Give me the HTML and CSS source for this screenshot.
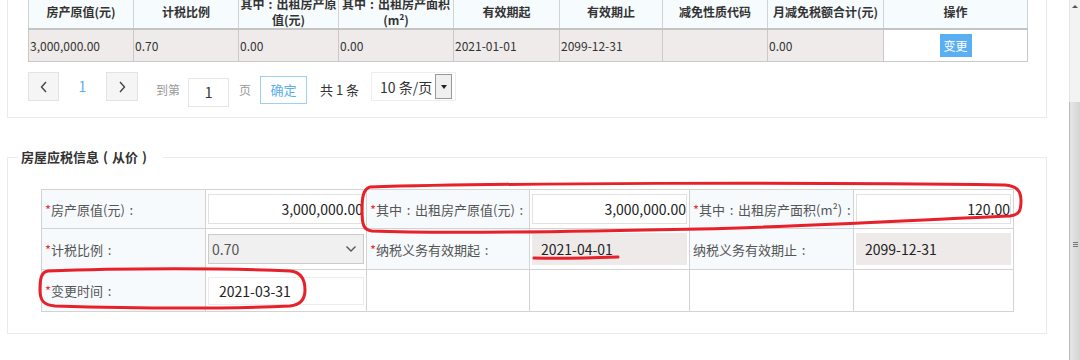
FILE: index.html
```html
<!DOCTYPE html>
<html lang="zh-CN">
<head>
    <meta charset="UTF-8">
    <meta name="viewport" content="width=device-width, initial-scale=1.0">
    <title>房屋应税信息</title>
    <link rel="stylesheet" href="styles.css">
</head>
<body>
    <div class="screen">
        <div class="main">
            <!-- 已有记录 -->
            <div class="panel">
                <table class="grid">
                    <colgroup>
                        <col style="width:105px"><col style="width:105px"><col style="width:100px">
                        <col style="width:115px"><col style="width:106px"><col style="width:103px">
                        <col style="width:105px"><col style="width:116px"><col style="width:144px">
                    </colgroup>
                    <tr>
                        <th>房产原值(元)</th>
                        <th>计税比例</th>
                        <th>其中<span class="p">:</span>出租房产原值(元)</th>
                        <th>其中<span class="p">:</span>出租房产面积(m²)</th>
                        <th>有效期起</th>
                        <th>有效期止</th>
                        <th>减免性质代码</th>
                        <th>月减免税额合计(元)</th>
                        <th>操作</th>
                    </tr>
                    <tr>
                        <td>3,000,000.00</td>
                        <td>0.70</td>
                        <td>0.00</td>
                        <td>0.00</td>
                        <td>2021-01-01</td>
                        <td>2099-12-31</td>
                        <td></td>
                        <td>0.00</td>
                        <td class="op"><span class="btn-change">变更</span></td>
                    </tr>
                </table>

                <div class="pager">
                    <span class="pg-btn prev">
                        <svg width="8" height="12" viewBox="0 0 8 12"><polyline points="6,1 1.5,6 6,11" fill="none" stroke="#444" stroke-width="1.4"/></svg>
                    </span>
                    <span class="pg-num">1</span>
                    <span class="pg-btn next">
                        <svg width="8" height="12" viewBox="0 0 8 12"><polyline points="2,1 6.5,6 2,11" fill="none" stroke="#444" stroke-width="1.4"/></svg>
                    </span>
                    <span class="pg-txt goto">到第</span>
                    <span class="pg-input">1</span>
                    <span class="pg-txt page">页</span>
                    <span class="pg-ok">确定</span>
                    <span class="pg-total">共 1 条</span>
                    <span class="pg-size">
                        10 条/页
                        <span class="pg-drop"></span>
                    </span>
                </div>
            </div>

            <!-- 房屋应税信息 -->
            <fieldset class="box">
                <legend>房屋应税信息<span class="p">(</span>从价<span class="p">)</span></legend>
                <table class="form">
                    <colgroup>
                        <col style="width:164px"><col style="width:161px"><col style="width:163px">
                        <col style="width:160px"><col style="width:164px"><col style="width:160px">
                    </colgroup>
                    <tr class="r1">
                        <td class="lb"><span class="req">*</span>房产原值(元)<span class="p">:</span></td>
                        <td><div class="fld">3,000,000.00</div></td>
                        <td class="lb"><span class="req">*</span>其中<span class="p">:</span>出租房产原值(元)<span class="p">:</span></td>
                        <td><div class="fld">3,000,000.00</div></td>
                        <td class="lb"><span class="req">*</span>其中<span class="p">:</span>出租房产面积(m²)<span class="p">:</span></td>
                        <td><div class="fld">120.00</div></td>
                    </tr>
                    <tr class="r2">
                        <td class="lb"><span class="req">*</span>计税比例<span class="p">:</span></td>
                        <td>
                            <div class="fld sel">
                                0.70
                                <svg width="12" height="8" viewBox="0 0 12 8"><polyline points="1.5,1.5 6,6 10.5,1.5" fill="none" stroke="#555" stroke-width="1.4"/></svg>
                            </div>
                        </td>
                        <td class="lb"><span class="req">*</span>纳税义务有效期起<span class="p">:</span></td>
                        <td><div class="fld ro">2021-04-01</div></td>
                        <td class="lb">纳税义务有效期止<span class="p">:</span></td>
                        <td><div class="fld ro">2099-12-31</div></td>
                    </tr>
                    <tr class="r3">
                        <td class="lb"><span class="req">*</span>变更时间<span class="p">:</span></td>
                        <td><div class="fld date">2021-03-31</div></td>
                        <td class="blank"></td>
                        <td class="blank"></td>
                        <td class="blank"></td>
                        <td class="blank"></td>
                    </tr>
                </table>
            </fieldset>

            <!-- 红色手绘标注 -->
            <svg class="marks" width="1069" height="360" viewBox="0 0 1069 360">
                <path d="M370,187 C500,183 800,182 1005,185 C1017,186 1021,191 1021,201 C1021,211 1019,215 1010,216 C930,219 820,226 700,229 C560,232 420,233 372,231 C363,230 362,224 362,210 C362,198 363,189 370,187 Z"/>
                <path d="M48,271 C120,268 230,268 290,271 C302,272 305,280 305,290 C305,300 300,305 290,306 C220,309 120,308 55,306 C43,305 40,300 40,290 C40,279 41,272 48,271 Z"/>
                <path d="M534,258 C560,259 590,258 618,257"/>
            </svg>
        </div>

        <div class="scrollbar">
            <div class="sb-top"><span class="sb-arrow"></span></div>
            <div class="sb-thumb"><span class="sb-grip"></span></div>
        </div>
    </div>
</body>
</html>
```

FILE: styles.css
```css
body{
    margin: 0;
    font-family: "Noto Sans CJK SC", "Noto Sans", sans-serif;
    color: #333;
    background-color: #fff;
    overflow: hidden;
}
/* 全角标点：半角符号放在一个字宽里居中 */
.p{
    display: inline-block;
    width: 1em;
    text-align: center;
}
.screen{
    display: flex;
    height: 360px;
    overflow: hidden;
}
.main{
    flex: 1;
    position: relative;
}

/* 上方列表 */
.panel{
    box-sizing: border-box;
    width: 1040px;
    margin: -6px 0 0 7px;
    padding: 0 0 9px 20px;
    border: 1px solid #ebebeb;
    border-top: 0;
}
.grid{
    width: 999px;
    border-collapse: collapse;
    table-layout: fixed;
    font-size: 12px;
}
.grid th{
    height: 33px;
    padding: 0;
    line-height: 16px;
    font-weight: bold;
    color: #333;
    text-align: center;
    background-color: #f6fbfd;
    border: 1px solid #d2d2d2;
    border-bottom: 2px solid #c4c4c4;
}
.grid td{
    height: 31px;
    padding: 0 1px;
    line-height: 16px;
    background-color: #efebeb;
    border: 1px solid #c9c9c9;
}
.grid td.op{
    background-color: #fff;
    text-align: center;
}
.btn-change{
    display: inline-block;
    width: 32px;
    height: 23px;
    line-height: 23px;
    color: #fff;
    background-color: #5aaef2;
    vertical-align: middle;
}

/* 分页 */
.pager{
    display: flex;
    align-items: flex-start;
    margin-top: 10px;
    height: 36px;
}
.pg-btn{
    box-sizing: border-box;
    display: flex;
    align-items: center;
    justify-content: center;
    width: 31px;
    height: 29px;
    border: 1px solid #e3e3e3;
    background-color: #f5f5f5;
}
.pg-btn.next{
    width: 32px;
}
.pg-num{
    width: 47px;
    text-align: center;
    line-height: 29px;
    font-size: 14px;
    color: #5aaeee;
}
.pg-txt{
    font-size: 12px;
    line-height: 36px;
    color: #999;
}
.pg-txt.goto{
    margin-left: 18px;
}
.pg-txt.page{
    margin-left: 10px;
}
.pg-input{
    box-sizing: border-box;
    width: 41px;
    height: 29px;
    margin: 6px 0 0 8px;
    border: 1px solid #e6e6e6;
    text-align: center;
    line-height: 27px;
    font-size: 14px;
}
.pg-ok{
    box-sizing: border-box;
    width: 47px;
    height: 28px;
    margin: 4px 0 0 9px;
    border: 1px solid #9fd0f3;
    text-align: center;
    line-height: 26px;
    font-size: 13px;
    color: #5aaeee;
}
.pg-total{
    margin-left: 13px;
    font-size: 13px;
    line-height: 36px;
}
.pg-size{
    box-sizing: border-box;
    display: flex;
    align-items: center;
    justify-content: space-between;
    width: 85px;
    height: 29px;
    margin-left: 12px;
    padding: 0 3px 0 8px;
    border: 1px solid #eee;
    font-size: 14px;
}
.pg-drop{
    box-sizing: border-box;
    display: flex;
    align-items: center;
    justify-content: center;
    width: 17px;
    height: 25px;
    border: 1px solid #999;
    background-color: #f0f0f0;
}
.pg-drop::after{
    content: "";
    border-left: 3px solid transparent;
    border-right: 3px solid transparent;
    border-top: 4px solid #222;
}

/* 房屋应税信息 */
.box{
    box-sizing: border-box;
    width: 1040px;
    min-width: 0;
    margin: 29px 0 0 7px;
    padding: 22px 0 21px 33px;
    border: 1px solid #ebebeb;
}
.box legend{
    margin-left: -23px;
    padding: 0 12px 0 3px;
    font-size: 13px;
    font-weight: bold;
    line-height: 20px;
    color: #333;
}
.form{
    width: 972px;
    border-collapse: collapse;
    table-layout: fixed;
    font-size: 13px;
}
.form td{
    padding: 0 2px;
    border: 1px solid #d3d3d3;
}
.form .r1 td{
    height: 38px;
}
.form .r2 td{
    height: 40px;
}
.form .r3 td{
    height: 41px;
}
.form td.lb{
    padding-left: 3px;
    color: #555;
    background-color: #f6fafc;
    white-space: nowrap;
}
.req{
    color: #e8303a;
}
.fld{
    box-sizing: border-box;
    height: 30px;
    line-height: 28px;
    border: 1px solid #e2e2e2;
    background-color: #fff;
    font-size: 14px;
    color: #222;
    text-align: right;
}
.fld.sel{
    display: flex;
    align-items: center;
    justify-content: space-between;
    padding: 0 6px 0 3px;
    border-color: #cbcbcb;
    background-color: #f0f0f0;
    color: #555;
    text-align: left;
}
.fld.ro{
    height: 32px;
    line-height: 32px;
    padding-left: 9px;
    border: 0;
    background-color: #eeeaea;
    text-align: left;
}
.fld.date{
    height: 28px;
    line-height: 26px;
    padding-left: 10px;
    border-color: #ececec;
    text-align: left;
}

/* 红色标注 */
.marks{
    position: absolute;
    left: 0;
    top: 0;
    pointer-events: none;
}
.marks path{
    fill: none;
    stroke: #e8202a;
    stroke-width: 3;
    stroke-linecap: round;
}

/* 滚动条 */
.scrollbar{
    display: flex;
    flex-direction: column;
    width: 11px;
}
.sb-top{
    display: flex;
    justify-content: center;
    height: 102px;
    padding-top: 5px;
    box-sizing: border-box;
    border-left: 1px solid #e4e4e4;
    background-color: #f3f3f3;
}
.sb-arrow{
    width: 0;
    height: 0;
    border-left: 3px solid transparent;
    border-right: 3px solid transparent;
    border-bottom: 3px solid #555;
}
.sb-thumb{
    flex: 1;
    display: flex;
    justify-content: center;
    padding-top: 140px;
    border-left: 1px solid #b9b9b9;
    background: linear-gradient(to right, #e6e6e6, #d4d4d4);
}
.sb-grip{
    width: 5px;
    height: 5px;
    background: repeating-linear-gradient(to bottom, #777 0 1px, transparent 1px 2px);
}
```
